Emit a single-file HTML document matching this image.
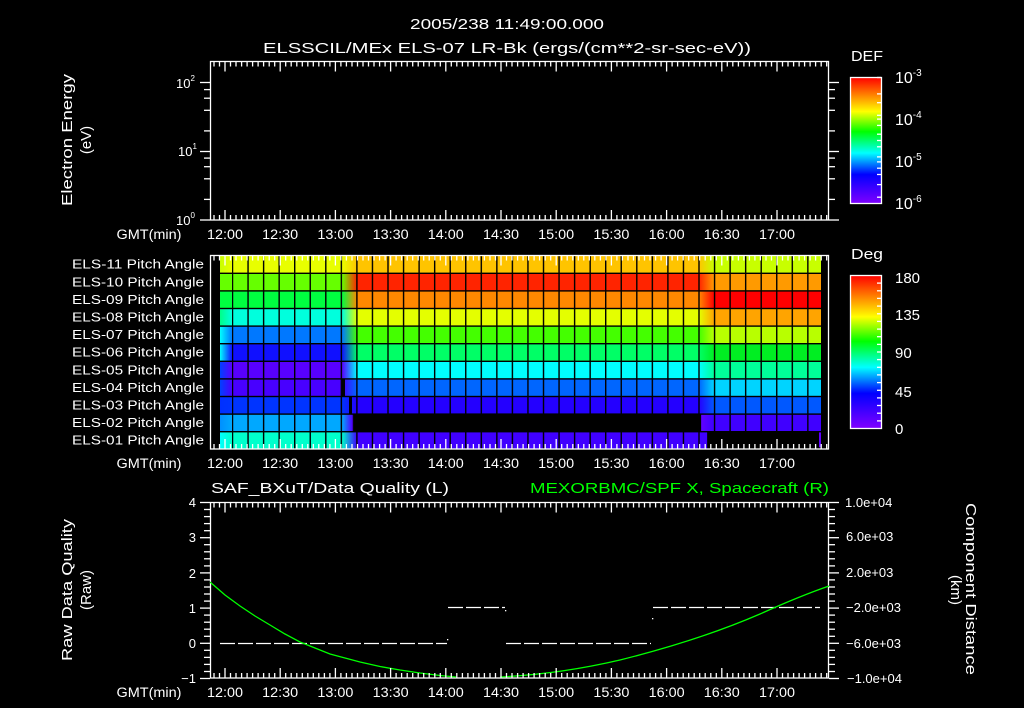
<!DOCTYPE html>
<html><head><meta charset="utf-8">
<style>
html,body{margin:0;padding:0;background:#000;}
svg{display:block;}
text{font-family:"Liberation Sans","DejaVu Sans",sans-serif;fill:#fff;}
</style></head>
<body>
<svg id="s" width="1024" height="708" viewBox="0 0 1024 708" xmlns="http://www.w3.org/2000/svg">
<defs>
<linearGradient id="cb" x1="0" y1="0" x2="0" y2="1">
<stop offset="0" stop-color="#ff0000"/>
<stop offset="0.13" stop-color="#ff7a00"/>
<stop offset="0.27" stop-color="#ffff00"/>
<stop offset="0.43" stop-color="#00ff00"/>
<stop offset="0.6" stop-color="#00ffff"/>
<stop offset="0.77" stop-color="#0000ff"/>
<stop offset="1" stop-color="#8000ff"/>
</linearGradient>
<pattern id="vg" patternUnits="userSpaceOnUse" x="231.8" y="0" width="15.55" height="708">
<rect x="0" y="0" width="1.4" height="708" fill="#000"/>
</pattern>
</defs>

<text x="410" y="29" font-size="15" textLength="194" lengthAdjust="spacingAndGlyphs">2005/238 11:49:00.000</text>
<text x="263" y="53" font-size="15" textLength="488" lengthAdjust="spacingAndGlyphs">ELSSCIL/MEx ELS-07 LR-Bk  (ergs/(cm**2-sr-sec-eV))</text>

<rect x="210.5" y="61.5" width="618" height="158.5" fill="none" stroke="#fff" stroke-width="1.3"/>
<text transform="translate(72,140) rotate(-90)" font-size="15" text-anchor="middle" textLength="132" lengthAdjust="spacingAndGlyphs">Electron Energy</text>
<text transform="translate(91,140) rotate(-90)" font-size="15" text-anchor="middle">(eV)</text>
<text x="176" y="88" font-size="13">10<tspan font-size="8" dy="-7">2</tspan></text>
<text x="178" y="156" font-size="13">10<tspan font-size="8" dy="-7">1</tspan></text>
<text x="176" y="225" font-size="13">10<tspan font-size="8" dy="-7">0</tspan></text>

<text x="851" y="61" font-size="15" textLength="32" lengthAdjust="spacingAndGlyphs">DEF</text>
<rect x="850.5" y="77.5" width="31" height="126" fill="url(#cb)" stroke="#fff" stroke-width="1.3"/>
<text x="895" y="83" font-size="16">10<tspan font-size="10" dy="-7">-3</tspan></text>
<text x="895" y="125" font-size="16">10<tspan font-size="10" dy="-7">-4</tspan></text>
<text x="895" y="167" font-size="16">10<tspan font-size="10" dy="-7">-5</tspan></text>
<text x="895" y="209" font-size="16">10<tspan font-size="10" dy="-7">-6</tspan></text>

<g id="heat"></g>
<rect x="210.5" y="255.5" width="618" height="193.5" fill="none" stroke="#fff" stroke-width="1.3"/>
<g font-size="12.5" text-anchor="end" id="ml"></g>

<text x="851" y="259" font-size="15" textLength="32" lengthAdjust="spacingAndGlyphs">Deg</text>
<rect x="850.5" y="275.5" width="31" height="153" fill="url(#cb)" stroke="#fff" stroke-width="1.3"/>
<text x="895" y="283" font-size="15">180</text>
<text x="895" y="320" font-size="15">135</text>
<text x="895" y="358" font-size="15">90</text>
<text x="895" y="397" font-size="15">45</text>
<text x="895" y="434" font-size="15">0</text>

<text x="211" y="493" font-size="15" textLength="238" lengthAdjust="spacingAndGlyphs">SAF_BXuT/Data Quality (L)</text>
<text x="530" y="493" font-size="15" style="fill:#00ff00" textLength="299" lengthAdjust="spacingAndGlyphs">MEXORBMC/SPF X, Spacecraft (R)</text>
<rect x="210.5" y="502.5" width="618" height="175.5" fill="none" stroke="#fff" stroke-width="1.3"/>
<text transform="translate(72,590) rotate(-90)" font-size="15" text-anchor="middle" textLength="142" lengthAdjust="spacingAndGlyphs">Raw Data Quality</text>
<text transform="translate(91,590) rotate(-90)" font-size="15" text-anchor="middle">(Raw)</text>
<text transform="translate(966,589) rotate(90)" font-size="15" text-anchor="middle" textLength="172" lengthAdjust="spacingAndGlyphs">Component Distance</text>
<text transform="translate(951,590) rotate(90)" font-size="15" text-anchor="middle">(km)</text>
<g font-size="13" text-anchor="end">
<text x="196" y="507">4</text><text x="196" y="542">3</text><text x="196" y="578">2</text>
<text x="196" y="613">1</text><text x="196" y="648">0</text><text x="196" y="683">−1</text>
</g>
<g font-size="13">
<text x="845" y="507">1.0e+04</text><text x="846" y="541">6.0e+03</text><text x="846" y="577">2.0e+03</text>
<text x="846" y="612">−2.0e+03</text><text x="846" y="648">−6.0e+03</text><text x="847" y="683">−1.0e+04</text>
</g>
<g stroke="#fff" stroke-width="1.3" stroke-dasharray="15 3" fill="none">
<line x1="220" y1="643.5" x2="447" y2="643.5"/>
<line x1="448" y1="607.5" x2="505" y2="607.5"/>
<line x1="506" y1="643.5" x2="651" y2="643.5"/>
<line x1="653" y1="607.5" x2="820" y2="607.5"/>
</g>
<rect x="447" y="639" width="1.3" height="1.3" fill="#fff"/>
<rect x="505" y="610" width="1.3" height="1.3" fill="#fff"/>
<rect x="652" y="618" width="1.3" height="1.3" fill="#fff"/>
<polyline fill="none" stroke="#00ff00" stroke-width="1.3" points="210,582 225,595 240,606 255,616 270,625 285,634 300,642 315,648 330,654 345,658 360,662 380,666.5 400,670 420,673 440,675.5 456,677"/>
<path fill="none" stroke="#00ff00" stroke-width="1.3" d="M500,677 Q560,674 620,660 Q700,640 760,614 Q800,596 829,586"/>

<g id="ticks" stroke="#fff" stroke-width="1.3"></g>
<g id="tl" font-size="13.5" text-anchor="middle"></g>
</svg>
<script>
(function(){
var NS="http://www.w3.org/2000/svg";
function el(p,n,a,t){var e=document.createElementNS(NS,n);for(var k in a)e.setAttribute(k,a[k]);if(t!=null)e.textContent=t;document.getElementById(p).appendChild(e);return e;}
var rows=[["#e8ff00","#ffc400","#c8ff00"],["#66ff00","#ff2400","#ff9a00"],["#00ff40","#ff8800","#ff0000"],["#00ffdd","#e4ff00","#ffa400"],["#0078ff","#44ff00","#b8ff00"],["#1010ff","#00ff66","#00ee22"],["#5800ff","#00ffff","#00ff99"],["#4800ff","#0066ff","#00d4ff"],["#0034ff","#2400ff","#0058ff"],["#00a8ff","#000000","#4000ff"],["#00ffcc","#4000ff","#000000"]];
var firsts=["#c8ff00","#66ff00","#00ff40","#00ff88","#00ffff","#00ffff","#0040ff","#0040ff","#0030ff","#0090ff","#00ffff"];
var y0=255.7,rh=17.6;
var defs=document.querySelector("defs");
rows.forEach(function(r,i){
 var g=document.createElementNS(NS,"linearGradient");g.setAttribute("id","g"+i);g.setAttribute("gradientUnits","userSpaceOnUse");
 g.setAttribute("x1","220");g.setAttribute("x2","821");g.setAttribute("y1","0");g.setAttribute("y2","0");
 var st=[[0,firsts[i]],[0.02,r[0]],[0.203,r[0]],[0.228,r[1]],[0.797,r[1]],[0.822,r[2]],[1,r[2]]];
 if(i==9)st=[[0,firsts[i]],[0.02,r[0]],[0.203,r[0]],[0.22,"#5000ff"],[0.2221,"#000"],[0.8,"#000"],[0.801,"#6000ff"],[0.82,r[2]],[1,r[2]]];
 if(i==10)st=[[0,firsts[i]],[0.02,r[0]],[0.203,r[0]],[0.228,r[1]],[0.81,r[1]],[0.811,"#000"],[1,"#000"]];
 st.forEach(function(s){var e=document.createElementNS(NS,"stop");e.setAttribute("offset",s[0]);e.setAttribute("stop-color",s[1]);g.appendChild(e);});
 defs.appendChild(g);
 el("heat","rect",{x:220,y:y0+i*rh,width:601,height:rh,fill:"url(#g"+i+")"});
});
el("heat","rect",{x:342,y:y0+7*rh,width:3,height:rh,fill:"#000"});
el("heat","rect",{x:349,y:y0+8*rh,width:3,height:rh,fill:"#000"});
el("heat","rect",{x:819,y:y0+10*rh,width:2,height:rh-2,fill:"#6000ff"});
el("heat","rect",{x:232,y:y0,width:589,height:rh*11,fill:"url(#vg)"});
for(var i=1;i<11;i++)el("heat","rect",{x:220,y:y0+i*rh-0.7,width:601,height:1.4,fill:"#000"});
var names=["ELS-11","ELS-10","ELS-09","ELS-08","ELS-07","ELS-06","ELS-05","ELS-04","ELS-03","ELS-02","ELS-01"];
names.forEach(function(n,i){el("ml","text",{x:204,y:y0+i*rh+13,textLength:132,lengthAdjust:"spacingAndGlyphs"},n+" Pitch Angle");});
function X(m){return 225+m*1.84;}
var panels=[[61.5,220],[255.5,449],[502.5,678]];
for(var m=-6;m<=327;m+=3){var x=X(m).toFixed(1);var L=(m%30==0)?10:5;
 panels.forEach(function(p){el("ticks","line",{x1:x,x2:x,y1:p[0],y2:p[0]+L});el("ticks","line",{x1:x,x2:x,y1:p[1],y2:p[1]-L});});}
var labs=["12:00","12:30","13:00","13:30","14:00","14:30","15:00","15:30","16:00","16:30","17:00"];
[239,468,697].forEach(function(yy){
 el("tl","text",{x:149,y:yy,textLength:65,lengthAdjust:"spacingAndGlyphs"},"GMT(min)");
 labs.forEach(function(l,k){el("tl","text",{x:X(30*k),y:yy,textLength:36,lengthAdjust:"spacingAndGlyphs"},l);});});
[0,1].forEach(function(d){[1,2,4,6,8].forEach(function(mm){var y=(220-68.5*(d+Math.log10(mm))).toFixed(1);var L=mm==1?10:6;
 el("ticks","line",{x1:210,x2:210-L,y1:y,y2:y});el("ticks","line",{x1:829,x2:829+L,y1:y,y2:y});});});
el("ticks","line",{x1:200,x2:210,y1:82.5,y2:82.5});el("ticks","line",{x1:829,x2:839,y1:82.5,y2:82.5});
for(var v=-1;v<=4.001;v+=0.2){var y=(643.3-35.2*v).toFixed(1);var maj=Math.abs(v-Math.round(v))<0.01;var L=maj?10:6;
 el("ticks","line",{x1:210,x2:210-L,y1:y,y2:y});el("ticks","line",{x1:829,x2:829+L,y1:y,y2:y});}
[[77.5,203.5,[0,0.13,0.2,0.3,0.33,0.38,0.45,0.5,0.55,0.63,0.67,0.72,0.77,0.85,0.95]],[275.5,428.5,[0.05,0.1,0.15,0.2,0.25,0.3,0.35,0.4,0.45,0.5,0.55,0.6,0.65,0.7,0.75,0.8,0.85,0.9,0.95]]].forEach(function(c){
 c[2].forEach(function(f){var y=(c[0]+(c[1]-c[0])*f).toFixed(1);el("ticks","line",{x1:881,x2:877,y1:y,y2:y});});});
})();
</script>
</body></html>
